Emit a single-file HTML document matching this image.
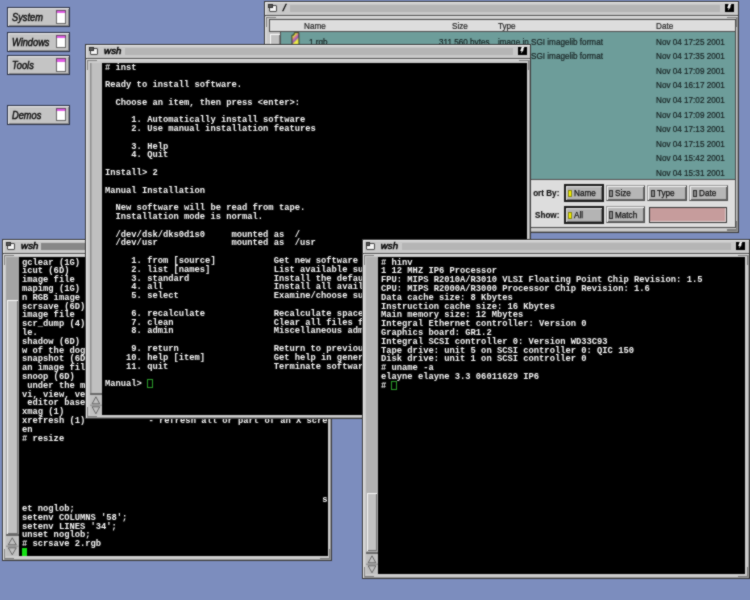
<!DOCTYPE html><html><head><meta charset="utf-8"><style>
html,body{margin:0;padding:0;width:750px;height:600px;overflow:hidden;background:#7c8dbe;}
*{box-sizing:border-box;} body{-webkit-font-smoothing:antialiased;}
.sq{display:inline-block;transform-origin:0 0;}
</style></head><body><svg width="0" height="0" style="position:absolute"><filter id="soft" x="0" y="0" width="100%" height="100%" color-interpolation-filters="sRGB"><feConvolveMatrix order="3" kernelMatrix="1 2 1 2 12 2 1 2 1" divisor="24" edgeMode="duplicate" preserveAlpha="true"/></filter></svg><div id="root" style="position:absolute;left:0;top:0;width:750px;height:600px;overflow:hidden;filter:url(#soft);background:#7c8dbe">
<div style="position:absolute;left:7.0px;top:7.3px;width:62.80px;height:19.70px;background:#c4c4c4;border:1px solid #2c3245;box-shadow:inset 1px 1px 0 #ececec, inset -1px -1px 0 #8c8c8c;"></div>
<div style="position:absolute;left:12.0px;top:12.3px;white-space:pre;transform:scaleX(0.89);transform-origin:0 0;font:italic 10.4px/11px 'Liberation Sans',sans-serif;color:#0c0c0c;-webkit-text-stroke:0.45px #0c0c0c;">System</div>
<div style="position:absolute;left:56.2px;top:10.3px;width:9.60px;height:13.40px;background:#fff;border:1px solid #666;"></div>
<div style="position:absolute;left:56.2px;top:10.3px;width:9.60px;height:3.20px;background:#e05ce4;border:1px solid #6a4a6a;border-bottom:none;"></div>
<div style="position:absolute;left:7.0px;top:32.1px;width:62.80px;height:19.70px;background:#c4c4c4;border:1px solid #2c3245;box-shadow:inset 1px 1px 0 #ececec, inset -1px -1px 0 #8c8c8c;"></div>
<div style="position:absolute;left:12.0px;top:37.1px;white-space:pre;transform:scaleX(0.89);transform-origin:0 0;font:italic 10.4px/11px 'Liberation Sans',sans-serif;color:#0c0c0c;-webkit-text-stroke:0.45px #0c0c0c;">Windows</div>
<div style="position:absolute;left:56.2px;top:35.1px;width:9.60px;height:13.40px;background:#fff;border:1px solid #666;"></div>
<div style="position:absolute;left:56.2px;top:35.1px;width:9.60px;height:3.20px;background:#e05ce4;border:1px solid #6a4a6a;border-bottom:none;"></div>
<div style="position:absolute;left:7.0px;top:55.4px;width:62.80px;height:19.70px;background:#c4c4c4;border:1px solid #2c3245;box-shadow:inset 1px 1px 0 #ececec, inset -1px -1px 0 #8c8c8c;"></div>
<div style="position:absolute;left:12.0px;top:60.4px;white-space:pre;transform:scaleX(0.89);transform-origin:0 0;font:italic 10.4px/11px 'Liberation Sans',sans-serif;color:#0c0c0c;-webkit-text-stroke:0.45px #0c0c0c;">Tools</div>
<div style="position:absolute;left:56.2px;top:58.4px;width:9.60px;height:13.40px;background:#fff;border:1px solid #666;"></div>
<div style="position:absolute;left:56.2px;top:58.4px;width:9.60px;height:3.20px;background:#e05ce4;border:1px solid #6a4a6a;border-bottom:none;"></div>
<div style="position:absolute;left:7.0px;top:105.1px;width:62.80px;height:19.70px;background:#c4c4c4;border:1px solid #2c3245;box-shadow:inset 1px 1px 0 #ececec, inset -1px -1px 0 #8c8c8c;"></div>
<div style="position:absolute;left:12.0px;top:110.1px;white-space:pre;transform:scaleX(0.89);transform-origin:0 0;font:italic 10.4px/11px 'Liberation Sans',sans-serif;color:#0c0c0c;-webkit-text-stroke:0.45px #0c0c0c;">Demos</div>
<div style="position:absolute;left:56.2px;top:108.1px;width:9.60px;height:13.40px;background:#fff;border:1px solid #666;"></div>
<div style="position:absolute;left:56.2px;top:108.1px;width:9.60px;height:3.20px;background:#e05ce4;border:1px solid #6a4a6a;border-bottom:none;"></div>
<div style="position:absolute;left:264.3px;top:1.3px;width:474.50px;height:231.30px;background:#cbcbcb;border:1px solid #383838;box-shadow:inset 1px 1px 0 #f0f0f0, inset -1px -1px 0 #9a9a9a;"></div>
<div style="position:absolute;left:265.3px;top:2.3px;width:472.50px;height:13.00px;background:#c8c8c8;box-shadow:inset 1px 1px 0 #f4f4f4;"></div>
<div style="position:absolute;left:265.3px;top:15.3px;width:472.50px;height:1.00px;background:#505050;"></div>
<div style="position:absolute;left:265.3px;top:16.3px;width:472.50px;height:1.00px;background:#e6e6e6;"></div>
<div style="position:absolute;left:268.7px;top:5.1000000000000005px;width:8.40px;height:6.80px;background:#f4f4f4;border:1px solid #464646;border-radius:1px;"></div>
<div style="position:absolute;left:268.3px;top:4.2px;width:4.40px;height:3.90px;background:#5a5a5a;border:1px solid #303030;"></div>
<div style="position:absolute;left:283.1px;top:2.3px;white-space:pre;font:italic 9.7px/12px 'Liberation Sans',sans-serif;color:#000;-webkit-text-stroke:0.5px #000;letter-spacing:0.1px;">/</div>
<div style="position:absolute;left:290.3px;top:5.0px;width:430.00px;height:6.90px;background:#b5b5b5;"></div>
<div style="position:absolute;left:725.2px;top:3.9000000000000004px;width:9.00px;height:7.80px;background:#000;"></div>
<svg style="position:absolute;left:725.2px;top:3.9000000000000004px" width="9" height="8" viewBox="0 0 9 8"><path d="M3.7 0 L6.4 0 L5.0 2.6 L6.0 2.6 L3.0 6.4 L3.6 3.9 L2.2 3.9 Z" fill="#f8f8f8"/></svg>
<div style="position:absolute;left:266.3px;top:17.3px;width:10.00px;height:1.20px;background:#7c7c7c;"></div>
<div style="position:absolute;left:266.3px;top:17.3px;width:1.20px;height:10.00px;background:#7c7c7c;"></div>
<div style="position:absolute;left:726.8px;top:17.3px;width:10.00px;height:1.20px;background:#7c7c7c;"></div>
<div style="position:absolute;left:735.5999999999999px;top:17.3px;width:1.20px;height:10.00px;background:#7c7c7c;"></div>
<div style="position:absolute;left:266.3px;top:229.4px;width:10.00px;height:1.20px;background:#7c7c7c;"></div>
<div style="position:absolute;left:266.3px;top:220.6px;width:1.20px;height:10.00px;background:#7c7c7c;"></div>
<div style="position:absolute;left:726.8px;top:229.4px;width:10.00px;height:1.20px;background:#7c7c7c;"></div>
<div style="position:absolute;left:735.5999999999999px;top:220.6px;width:1.20px;height:10.00px;background:#7c7c7c;"></div>
<div style="position:absolute;left:268.5px;top:19.2px;width:467.10px;height:209.20px;background:#dddddd;border:1px solid #4a4a4a;"></div>
<div style="position:absolute;left:304.0px;top:20.8px;white-space:pre;transform:scaleX(0.925);transform-origin:0 0;font:8.8px/11px 'Liberation Sans',sans-serif;color:#1e1e1e;-webkit-text-stroke:0.2px #1e1e1e;">Name</div>
<div style="position:absolute;left:452.0px;top:20.8px;white-space:pre;transform:scaleX(0.925);transform-origin:0 0;font:8.8px/11px 'Liberation Sans',sans-serif;color:#1e1e1e;-webkit-text-stroke:0.2px #1e1e1e;">Size</div>
<div style="position:absolute;left:498.0px;top:20.8px;white-space:pre;transform:scaleX(0.925);transform-origin:0 0;font:8.8px/11px 'Liberation Sans',sans-serif;color:#1e1e1e;-webkit-text-stroke:0.2px #1e1e1e;">Type</div>
<div style="position:absolute;left:655.6px;top:20.8px;white-space:pre;transform:scaleX(0.925);transform-origin:0 0;font:8.8px/11px 'Liberation Sans',sans-serif;color:#1e1e1e;-webkit-text-stroke:0.2px #1e1e1e;">Date</div>
<div style="position:absolute;left:269.4px;top:31.2px;width:465.20px;height:1.10px;background:#505050;"></div>
<div style="position:absolute;left:269.4px;top:32.3px;width:10.90px;height:146.30px;background:#c4c4c4;"></div>
<div style="position:absolute;left:280.3px;top:32.3px;width:1.00px;height:146.30px;background:#505050;"></div>
<div style="position:absolute;left:281.3px;top:32.3px;width:453.30px;height:146.30px;background:#6d9d9a;"></div>
<div style="position:absolute;left:269.6px;top:33.6px;width:10.20px;height:12.40px;background:#c2c2c2;box-shadow:inset 1px 1px 0 #fafafa, inset -1px -1px 0 #7c7c7c;"></div>
<svg style="position:absolute;left:290.5px;top:31.5px" width="9" height="13.5" viewBox="0 0 9 13.5"><defs><linearGradient id="ig" x1="0" y1="0" x2="0.6" y2="1"><stop offset="0" stop-color="#70c030"/><stop offset="0.3" stop-color="#e0e040"/><stop offset="0.5" stop-color="#d070a0"/><stop offset="0.65" stop-color="#9060b0"/><stop offset="0.8" stop-color="#f0f040"/><stop offset="1" stop-color="#e8e850"/></linearGradient></defs><path d="M3.2 0.8 L7.8 0.6 L8.0 12.8 L1.0 12.8 L0.9 3.2 L3.0 3.0 Z" fill="url(#ig)" stroke="#2a3020" stroke-width="0.9"/></svg>
<div style="position:absolute;left:269.4px;top:178.6px;width:465.20px;height:0.90px;background:#505050;"></div>
<div style="position:absolute;left:656.4px;top:36.7px;white-space:pre;transform:scaleX(0.925);transform-origin:0 0;font:8.8px/11px 'Liberation Sans',sans-serif;color:#162020;-webkit-text-stroke:0.2px #162020;">Nov 04 17:25 2001</div>
<div style="position:absolute;left:656.4px;top:51.29px;white-space:pre;transform:scaleX(0.925);transform-origin:0 0;font:8.8px/11px 'Liberation Sans',sans-serif;color:#162020;-webkit-text-stroke:0.2px #162020;">Nov 04 17:35 2001</div>
<div style="position:absolute;left:656.4px;top:65.88px;white-space:pre;transform:scaleX(0.925);transform-origin:0 0;font:8.8px/11px 'Liberation Sans',sans-serif;color:#162020;-webkit-text-stroke:0.2px #162020;">Nov 04 17:09 2001</div>
<div style="position:absolute;left:656.4px;top:80.47px;white-space:pre;transform:scaleX(0.925);transform-origin:0 0;font:8.8px/11px 'Liberation Sans',sans-serif;color:#162020;-webkit-text-stroke:0.2px #162020;">Nov 04 16:17 2001</div>
<div style="position:absolute;left:656.4px;top:95.06px;white-space:pre;transform:scaleX(0.925);transform-origin:0 0;font:8.8px/11px 'Liberation Sans',sans-serif;color:#162020;-webkit-text-stroke:0.2px #162020;">Nov 04 17:02 2001</div>
<div style="position:absolute;left:656.4px;top:109.65px;white-space:pre;transform:scaleX(0.925);transform-origin:0 0;font:8.8px/11px 'Liberation Sans',sans-serif;color:#162020;-webkit-text-stroke:0.2px #162020;">Nov 04 17:09 2001</div>
<div style="position:absolute;left:656.4px;top:124.23999999999998px;white-space:pre;transform:scaleX(0.925);transform-origin:0 0;font:8.8px/11px 'Liberation Sans',sans-serif;color:#162020;-webkit-text-stroke:0.2px #162020;">Nov 04 17:13 2001</div>
<div style="position:absolute;left:656.4px;top:138.82999999999998px;white-space:pre;transform:scaleX(0.925);transform-origin:0 0;font:8.8px/11px 'Liberation Sans',sans-serif;color:#162020;-webkit-text-stroke:0.2px #162020;">Nov 04 17:15 2001</div>
<div style="position:absolute;left:656.4px;top:153.42px;white-space:pre;transform:scaleX(0.925);transform-origin:0 0;font:8.8px/11px 'Liberation Sans',sans-serif;color:#162020;-webkit-text-stroke:0.2px #162020;">Nov 04 15:42 2001</div>
<div style="position:absolute;left:656.4px;top:168.01px;white-space:pre;transform:scaleX(0.925);transform-origin:0 0;font:8.8px/11px 'Liberation Sans',sans-serif;color:#162020;-webkit-text-stroke:0.2px #162020;">Nov 04 15:31 2001</div>
<div style="position:absolute;left:308.6px;top:36.7px;white-space:pre;transform:scaleX(0.925);transform-origin:0 0;font:8.8px/11px 'Liberation Sans',sans-serif;color:#162020;-webkit-text-stroke:0.2px #162020;">1.rgb</div>
<div style="position:absolute;left:439.0px;top:36.7px;white-space:pre;transform:scaleX(0.925);transform-origin:0 0;font:8.8px/11px 'Liberation Sans',sans-serif;color:#162020;-webkit-text-stroke:0.2px #162020;">311,560 bytes</div>
<div style="position:absolute;left:498.0px;top:36.7px;white-space:pre;transform:scaleX(0.925);transform-origin:0 0;font:8.8px/11px 'Liberation Sans',sans-serif;color:#162020;-webkit-text-stroke:0.2px #162020;">image in SGI imagelib format</div>
<div style="position:absolute;left:498.0px;top:51.3px;white-space:pre;transform:scaleX(0.925);transform-origin:0 0;font:8.8px/11px 'Liberation Sans',sans-serif;color:#162020;-webkit-text-stroke:0.2px #162020;">image in SGI imagelib format</div>
<div style="position:absolute;right:190.39999999999998px;top:188.0px;white-space:pre;transform:scaleX(0.925);transform-origin:100% 0;font:bold 8.8px/11px 'Liberation Sans',sans-serif;color:#111;-webkit-text-stroke:0.15px #111;">ort By:</div>
<div style="position:absolute;right:190.39999999999998px;top:209.8px;white-space:pre;transform:scaleX(0.925);transform-origin:100% 0;font:bold 8.8px/11px 'Liberation Sans',sans-serif;color:#111;-webkit-text-stroke:0.15px #111;">Show:</div>
<div style="position:absolute;left:564.1px;top:184.2px;width:39.80px;height:17.70px;background:#b4b4b4;border:2px solid #1c1c1c;box-shadow:inset 1px 1px 0 #e4e4e4, inset -1px -1px 0 #747474;"></div>
<div style="position:absolute;left:568.1px;top:189.79999999999998px;width:3.60px;height:7.40px;background:#f4f000;border:0.6px solid #8a8a10;"></div>
<div style="position:absolute;left:573.5px;top:187.79999999999998px;white-space:pre;transform:scaleX(0.925);transform-origin:0 0;font:8.8px/11px 'Liberation Sans',sans-serif;color:#111;-webkit-text-stroke:0.25px #111;">Name</div>
<div style="position:absolute;left:605.7px;top:184.6px;width:39.30px;height:16.90px;background:#b6b6b6;border:1px solid #505050;border-top-color:#9a9a9a;border-left-color:#9a9a9a;box-shadow:inset 1px 1px 0 #f4f4f4, inset -1px -1px 0 #666;"></div>
<div style="position:absolute;left:609.3000000000001px;top:189.6px;width:4.00px;height:7.80px;background:#8a8a8a;border:1px solid #2e2e2e;"></div>
<div style="position:absolute;left:615.1px;top:188.2px;white-space:pre;transform:scaleX(0.925);transform-origin:0 0;font:8.8px/11px 'Liberation Sans',sans-serif;color:#111;-webkit-text-stroke:0.25px #111;">Size</div>
<div style="position:absolute;left:647.4px;top:184.6px;width:39.60px;height:16.90px;background:#b6b6b6;border:1px solid #505050;border-top-color:#9a9a9a;border-left-color:#9a9a9a;box-shadow:inset 1px 1px 0 #f4f4f4, inset -1px -1px 0 #666;"></div>
<div style="position:absolute;left:651.0px;top:189.6px;width:4.00px;height:7.80px;background:#8a8a8a;border:1px solid #2e2e2e;"></div>
<div style="position:absolute;left:656.8px;top:188.2px;white-space:pre;transform:scaleX(0.925);transform-origin:0 0;font:8.8px/11px 'Liberation Sans',sans-serif;color:#111;-webkit-text-stroke:0.25px #111;">Type</div>
<div style="position:absolute;left:689.2px;top:184.6px;width:39.30px;height:16.90px;background:#b6b6b6;border:1px solid #505050;border-top-color:#9a9a9a;border-left-color:#9a9a9a;box-shadow:inset 1px 1px 0 #f4f4f4, inset -1px -1px 0 #666;"></div>
<div style="position:absolute;left:692.8000000000001px;top:189.6px;width:4.00px;height:7.80px;background:#8a8a8a;border:1px solid #2e2e2e;"></div>
<div style="position:absolute;left:698.6px;top:188.2px;white-space:pre;transform:scaleX(0.925);transform-origin:0 0;font:8.8px/11px 'Liberation Sans',sans-serif;color:#111;-webkit-text-stroke:0.25px #111;">Date</div>
<div style="position:absolute;left:564.1px;top:206.0px;width:39.80px;height:17.70px;background:#b4b4b4;border:2px solid #1c1c1c;box-shadow:inset 1px 1px 0 #e4e4e4, inset -1px -1px 0 #747474;"></div>
<div style="position:absolute;left:568.1px;top:211.6px;width:3.60px;height:7.40px;background:#f4f000;border:0.6px solid #8a8a10;"></div>
<div style="position:absolute;left:573.5px;top:209.6px;white-space:pre;transform:scaleX(0.925);transform-origin:0 0;font:8.8px/11px 'Liberation Sans',sans-serif;color:#111;-webkit-text-stroke:0.25px #111;">All</div>
<div style="position:absolute;left:605.7px;top:206.4px;width:39.30px;height:16.90px;background:#b6b6b6;border:1px solid #505050;border-top-color:#9a9a9a;border-left-color:#9a9a9a;box-shadow:inset 1px 1px 0 #f4f4f4, inset -1px -1px 0 #666;"></div>
<div style="position:absolute;left:609.3000000000001px;top:211.4px;width:4.00px;height:7.80px;background:#8a8a8a;border:1px solid #2e2e2e;"></div>
<div style="position:absolute;left:615.1px;top:210.0px;white-space:pre;transform:scaleX(0.925);transform-origin:0 0;font:8.8px/11px 'Liberation Sans',sans-serif;color:#111;-webkit-text-stroke:0.25px #111;">Match</div>
<div style="position:absolute;left:649.2px;top:206.8px;width:77.80px;height:16.40px;background:#c69c9c;border:1.2px solid #363636;box-shadow:inset -1px -1px 0 #e6d6d6;"></div>
<div style="position:absolute;left:2.25px;top:239.25px;width:329.75px;height:321.55px;background:#cbcbcb;border:1px solid #383838;box-shadow:inset 1px 1px 0 #f0f0f0, inset -1px -1px 0 #9a9a9a;"></div>
<div style="position:absolute;left:3.25px;top:240.25px;width:327.75px;height:13.00px;background:#c8c8c8;box-shadow:inset 1px 1px 0 #f4f4f4;"></div>
<div style="position:absolute;left:3.25px;top:253.25px;width:327.75px;height:1.00px;background:#505050;"></div>
<div style="position:absolute;left:3.25px;top:254.25px;width:327.75px;height:1.00px;background:#e6e6e6;"></div>
<div style="position:absolute;left:6.65px;top:243.05px;width:8.40px;height:6.80px;background:#f4f4f4;border:1px solid #464646;border-radius:1px;"></div>
<div style="position:absolute;left:6.25px;top:242.15px;width:4.40px;height:3.90px;background:#5a5a5a;border:1px solid #303030;"></div>
<div style="position:absolute;left:21.05px;top:240.25px;white-space:pre;font:italic 9.7px/12px 'Liberation Sans',sans-serif;color:#000;-webkit-text-stroke:0.5px #000;letter-spacing:0.1px;">wsh</div>
<div style="position:absolute;left:41.25px;top:242.95px;width:261.00px;height:6.90px;background:#878787;"></div>
<div style="position:absolute;left:4.25px;top:255.25px;width:10.00px;height:1.20px;background:#7c7c7c;"></div>
<div style="position:absolute;left:4.25px;top:255.25px;width:1.20px;height:10.00px;background:#7c7c7c;"></div>
<div style="position:absolute;left:320.0px;top:255.25px;width:10.00px;height:1.20px;background:#7c7c7c;"></div>
<div style="position:absolute;left:328.8px;top:255.25px;width:1.20px;height:10.00px;background:#7c7c7c;"></div>
<div style="position:absolute;left:4.25px;top:557.5999999999999px;width:10.00px;height:1.20px;background:#7c7c7c;"></div>
<div style="position:absolute;left:4.25px;top:548.8px;width:1.20px;height:10.00px;background:#7c7c7c;"></div>
<div style="position:absolute;left:320.0px;top:557.5999999999999px;width:10.00px;height:1.20px;background:#7c7c7c;"></div>
<div style="position:absolute;left:328.8px;top:548.8px;width:1.20px;height:10.00px;background:#7c7c7c;"></div>
<div style="position:absolute;left:18.8px;top:257.2px;width:309.20px;height:299.20px;background:#000;"></div>
<div style="position:absolute;left:6.3px;top:257.2px;width:12.50px;height:299.20px;background:#a4a4a4;"></div>
<div style="position:absolute;left:7.3px;top:300.0px;width:11.10px;height:233.60px;background:#c2c2c2;box-shadow:inset 1px 1px 0 #f6f6f6, inset -1px -1px 0 #727272;"></div>
<div style="position:absolute;left:6.3px;top:534.3px;width:12.50px;height:1.60px;background:#6a6a6a;"></div>
<div style="position:absolute;left:6.3px;top:535.9px;width:12.50px;height:20.50px;background:#c0c0c0;"></div>
<svg style="position:absolute;left:6.3px;top:535.9px" width="12.50" height="20.5" viewBox="0 0 12.50 20.5"><path d="M2.25 8.8 L6.25 1.8 L10.25 8.8 Z" fill="none" stroke="#5c5c5c" stroke-width="0.9"/><line x1="0" y1="10.2" x2="12.50" y2="10.2" stroke="#808080" stroke-width="0.9"/><path d="M2.25 11.8 L6.25 18.8 L10.25 11.8 Z" fill="none" stroke="#5c5c5c" stroke-width="0.9"/></svg>
<pre style="position:absolute;left:22.0px;top:258.6px;margin:0;font:bold 8.79px/8.79px 'Liberation Mono',monospace;color:#f8f8f8;white-space:pre;">gclear (1G)
icut (6D)
image file
mapimg (1G)
n RGB image
scrsave (6D)
image file
scr_dump (4)
le.
shadow (6D)
w of the dog
snapshot (6D
an image fil
snoop (6D)
 under the m
vi, view, ve
 editor base
xmag (1)
xrefresh (1)            - refresh all or part of an X scre
en
# resize






                                                         s
et noglob;
setenv COLUMNS '58';
setenv LINES '34';
unset noglob;
# scrsave 2.rgb
</pre>
<div style="position:absolute;left:21.8px;top:547.8px;width:5.60px;height:8.60px;background:#14e014;"></div>
<div style="position:absolute;left:85.25px;top:44.25px;width:446.05px;height:374.55px;background:#cbcbcb;border:1px solid #383838;box-shadow:inset 1px 1px 0 #f0f0f0, inset -1px -1px 0 #9a9a9a;"></div>
<div style="position:absolute;left:86.25px;top:45.25px;width:444.05px;height:13.00px;background:#c8c8c8;box-shadow:inset 1px 1px 0 #f4f4f4;"></div>
<div style="position:absolute;left:86.25px;top:58.25px;width:444.05px;height:1.00px;background:#505050;"></div>
<div style="position:absolute;left:86.25px;top:59.25px;width:444.05px;height:1.00px;background:#e6e6e6;"></div>
<div style="position:absolute;left:89.65px;top:48.05px;width:8.40px;height:6.80px;background:#f4f4f4;border:1px solid #464646;border-radius:1px;"></div>
<div style="position:absolute;left:89.25px;top:47.15px;width:4.40px;height:3.90px;background:#5a5a5a;border:1px solid #303030;"></div>
<div style="position:absolute;left:104.05px;top:45.25px;white-space:pre;font:italic 9.7px/12px 'Liberation Sans',sans-serif;color:#000;-webkit-text-stroke:0.5px #000;letter-spacing:0.1px;">wsh</div>
<div style="position:absolute;left:125.25px;top:47.95px;width:388.00px;height:6.90px;background:#b5b5b5;"></div>
<div style="position:absolute;left:518.05px;top:46.85px;width:9.00px;height:7.80px;background:#000;"></div>
<svg style="position:absolute;left:518.05px;top:46.85px" width="9" height="8" viewBox="0 0 9 8"><path d="M3.7 0 L6.4 0 L5.0 2.6 L6.0 2.6 L3.0 6.4 L3.6 3.9 L2.2 3.9 Z" fill="#f8f8f8"/></svg>
<div style="position:absolute;left:87.25px;top:60.25px;width:10.00px;height:1.20px;background:#7c7c7c;"></div>
<div style="position:absolute;left:87.25px;top:60.25px;width:1.20px;height:10.00px;background:#7c7c7c;"></div>
<div style="position:absolute;left:519.3px;top:60.25px;width:10.00px;height:1.20px;background:#7c7c7c;"></div>
<div style="position:absolute;left:528.0999999999999px;top:60.25px;width:1.20px;height:10.00px;background:#7c7c7c;"></div>
<div style="position:absolute;left:87.25px;top:415.6px;width:10.00px;height:1.20px;background:#7c7c7c;"></div>
<div style="position:absolute;left:87.25px;top:406.8px;width:1.20px;height:10.00px;background:#7c7c7c;"></div>
<div style="position:absolute;left:519.3px;top:415.6px;width:10.00px;height:1.20px;background:#7c7c7c;"></div>
<div style="position:absolute;left:528.0999999999999px;top:406.8px;width:1.20px;height:10.00px;background:#7c7c7c;"></div>
<div style="position:absolute;left:102.0px;top:63.0px;width:425.00px;height:352.20px;background:#000;"></div>
<div style="position:absolute;left:90.2px;top:63.0px;width:11.80px;height:352.20px;background:#b0b0b0;"></div>
<div style="position:absolute;left:90.2px;top:63.0px;width:11.80px;height:329.60px;background:#c0c0c0;box-shadow:inset 1.5px 0 0 #8e8e8e;"></div>
<div style="position:absolute;left:90.2px;top:393.09999999999997px;width:11.80px;height:1.60px;background:#6a6a6a;"></div>
<div style="position:absolute;left:90.2px;top:394.7px;width:11.80px;height:20.50px;background:#c0c0c0;"></div>
<svg style="position:absolute;left:90.2px;top:394.7px" width="11.80" height="20.5" viewBox="0 0 11.80 20.5"><path d="M2.12 8.8 L5.90 1.8 L9.68 8.8 Z" fill="none" stroke="#5c5c5c" stroke-width="0.9"/><line x1="0" y1="10.2" x2="11.80" y2="10.2" stroke="#808080" stroke-width="0.9"/><path d="M2.12 11.8 L5.90 18.8 L9.68 11.8 Z" fill="none" stroke="#5c5c5c" stroke-width="0.9"/></svg>
<pre style="position:absolute;left:105.0px;top:63.5px;margin:0;font:bold 8.79px/8.79px 'Liberation Mono',monospace;color:#f8f8f8;white-space:pre;"># inst

Ready to install software.

  Choose an item, then press &lt;enter&gt;:

     1. Automatically install software
     2. Use manual installation features

     3. Help
     4. Quit

Install&gt; 2

Manual Installation

  New software will be read from tape.
  Installation mode is normal.

  /dev/dsk/dks0d1s0     mounted as  /
  /dev/usr              mounted as  /usr

     1. from [source]           Get new software from the specified source
     2. list [names]            List available subsystems
     3. standard                Install the default subsystems
     4. all                     Install all available subsystems
     5. select                  Examine/choose subsystems

     6. recalculate             Recalculate space requirements
     7. clean                   Clear all files from the selections
     8. admin                   Miscellaneous administrative commands

     9. return                  Return to previous menu
    10. help [item]             Get help in general or on a specific word
    11. quit                    Terminate software installation

Manual&gt; </pre>
<div style="position:absolute;left:146.8px;top:379.0px;width:6.00px;height:9.40px;border:1px solid #2a9a2a;"></div>
<div style="position:absolute;left:361.9px;top:239.2px;width:388.10px;height:340.20px;background:#cbcbcb;border:1px solid #383838;box-shadow:inset 1px 1px 0 #f0f0f0, inset -1px -1px 0 #9a9a9a;"></div>
<div style="position:absolute;left:362.9px;top:240.2px;width:386.10px;height:13.00px;background:#c8c8c8;box-shadow:inset 1px 1px 0 #f4f4f4;"></div>
<div style="position:absolute;left:362.9px;top:253.2px;width:386.10px;height:1.00px;background:#505050;"></div>
<div style="position:absolute;left:362.9px;top:254.2px;width:386.10px;height:1.00px;background:#e6e6e6;"></div>
<div style="position:absolute;left:366.29999999999995px;top:243.0px;width:8.40px;height:6.80px;background:#f4f4f4;border:1px solid #464646;border-radius:1px;"></div>
<div style="position:absolute;left:365.9px;top:242.1px;width:4.40px;height:3.90px;background:#5a5a5a;border:1px solid #303030;"></div>
<div style="position:absolute;left:380.7px;top:240.2px;white-space:pre;font:italic 9.7px/12px 'Liberation Sans',sans-serif;color:#000;-webkit-text-stroke:0.5px #000;letter-spacing:0.1px;">wsh</div>
<div style="position:absolute;left:401.9px;top:242.89999999999998px;width:329.30px;height:6.90px;background:#b5b5b5;"></div>
<div style="position:absolute;left:736.0999999999999px;top:241.79999999999998px;width:9.00px;height:7.80px;background:#000;"></div>
<svg style="position:absolute;left:736.0999999999999px;top:241.79999999999998px" width="9" height="8" viewBox="0 0 9 8"><path d="M3.7 0 L6.4 0 L5.0 2.6 L6.0 2.6 L3.0 6.4 L3.6 3.9 L2.2 3.9 Z" fill="#f8f8f8"/></svg>
<div style="position:absolute;left:363.9px;top:255.2px;width:10.00px;height:1.20px;background:#7c7c7c;"></div>
<div style="position:absolute;left:363.9px;top:255.2px;width:1.20px;height:10.00px;background:#7c7c7c;"></div>
<div style="position:absolute;left:738.0px;top:255.2px;width:10.00px;height:1.20px;background:#7c7c7c;"></div>
<div style="position:absolute;left:746.8px;top:255.2px;width:1.20px;height:10.00px;background:#7c7c7c;"></div>
<div style="position:absolute;left:363.9px;top:576.1999999999999px;width:10.00px;height:1.20px;background:#7c7c7c;"></div>
<div style="position:absolute;left:363.9px;top:567.4px;width:1.20px;height:10.00px;background:#7c7c7c;"></div>
<div style="position:absolute;left:738.0px;top:576.1999999999999px;width:10.00px;height:1.20px;background:#7c7c7c;"></div>
<div style="position:absolute;left:746.8px;top:567.4px;width:1.20px;height:10.00px;background:#7c7c7c;"></div>
<div style="position:absolute;left:377.8px;top:257.2px;width:367.40px;height:317.00px;background:#000;"></div>
<div style="position:absolute;left:365.8px;top:257.2px;width:12.00px;height:317.00px;background:#b2b2b2;"></div>
<div style="position:absolute;left:366.8px;top:493.3px;width:10.60px;height:57.90px;background:#c2c2c2;box-shadow:inset 1px 1px 0 #f6f6f6, inset -1px -1px 0 #727272;"></div>
<div style="position:absolute;left:365.8px;top:552.1px;width:12.00px;height:1.60px;background:#6a6a6a;"></div>
<div style="position:absolute;left:365.8px;top:553.7px;width:12.00px;height:20.50px;background:#c0c0c0;"></div>
<svg style="position:absolute;left:365.8px;top:553.7px" width="12.00" height="20.5" viewBox="0 0 12.00 20.5"><path d="M2.16 8.8 L6.00 1.8 L9.84 8.8 Z" fill="none" stroke="#5c5c5c" stroke-width="0.9"/><line x1="0" y1="10.2" x2="12.00" y2="10.2" stroke="#808080" stroke-width="0.9"/><path d="M2.16 11.8 L6.00 18.8 L9.84 11.8 Z" fill="none" stroke="#5c5c5c" stroke-width="0.9"/></svg>
<pre style="position:absolute;left:381.0px;top:258.6px;margin:0;font:bold 8.79px/8.79px 'Liberation Mono',monospace;color:#f8f8f8;white-space:pre;"># hinv
1 12 MHZ IP6 Processor
FPU: MIPS R2010A/R3010 VLSI Floating Point Chip Revision: 1.5
CPU: MIPS R2000A/R3000 Processor Chip Revision: 1.6
Data cache size: 8 Kbytes
Instruction cache size: 16 Kbytes
Main memory size: 12 Mbytes
Integral Ethernet controller: Version 0
Graphics board: GR1.2
Integral SCSI controller 0: Version WD33C93
Tape drive: unit 5 on SCSI controller 0: QIC 150
Disk drive: unit 1 on SCSI controller 0
# uname -a
elayne elayne 3.3 06011629 IP6
# </pre>
<div style="position:absolute;left:391.2px;top:381.0px;width:5.80px;height:9.00px;border:1px solid #2a9a2a;"></div>
</div></body></html>
